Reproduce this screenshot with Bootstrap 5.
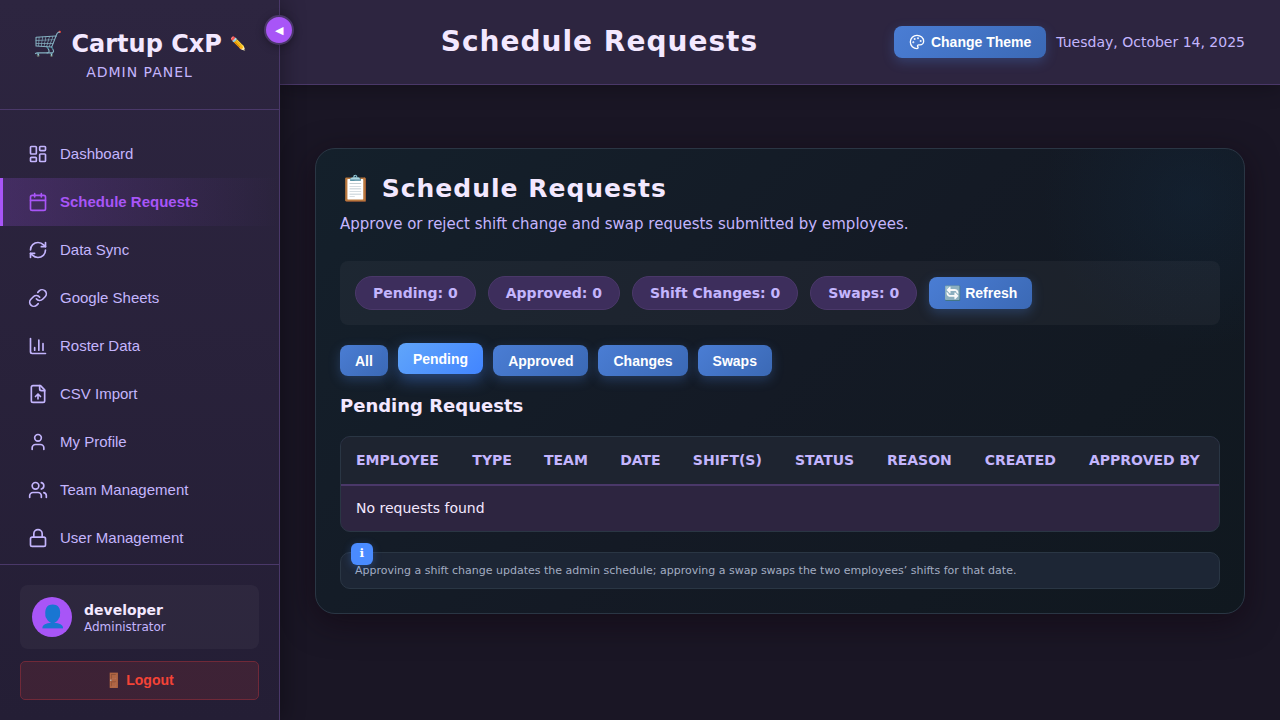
<!DOCTYPE html>
<html lang="en" data-bs-theme="dark">
<head>
<meta charset="utf-8">
<meta name="viewport" content="width=device-width, initial-scale=1">
<title>Schedule Requests - Cartup CxP</title>
<link href="https://cdn.jsdelivr.net/npm/bootstrap@5.3.0/dist/css/bootstrap.min.css" rel="stylesheet">
<style>
:root { --line: #4a3869; --ink: #f3e8ff; --soft: #c4b5fd; --accent: #a855f7; --edge: #2a3644; }
body { background: #1a1625; color: var(--ink); font-family: "DejaVu Sans", sans-serif; font-size: 14px; }
h1, h2, h3 { color: var(--ink); }
button, .side-link { font-family: "Liberation Sans", sans-serif; }

.sidebar { width: 280px; background: linear-gradient(180deg, #2d2540, #241e35); border-right: 1px solid var(--line); box-shadow: 4px 0 20px rgba(0,0,0,.3); z-index: 2; }
.side-head { padding: 25px 20px 28px; border-bottom: 1px solid var(--line); }
.brand { font-size: 24px; line-height: 38px; }
.brand-edit { font-size: 13px; line-height: 16px; }
.brand-sub { color: var(--soft); line-height: 18px; letter-spacing: 1px; }
.side-nav { min-height: 0; overflow: hidden; padding-top: 20px; }
.side-link { height: 48px; padding: 0 28px 0 25px; border-left: 3px solid transparent; color: var(--soft); font-size: 15px; text-decoration: none; }
.side-link:hover { color: var(--ink); }
.side-link.active { color: var(--accent); font-weight: 700; border-left-color: var(--accent); background: linear-gradient(90deg, rgba(168,85,247,.2), transparent); }
.line-icon { fill: none; stroke: currentColor; stroke-width: 2; stroke-linecap: round; stroke-linejoin: round; flex: none; }
.side-foot { padding: 20px; border-top: 1px solid var(--line); }
.user-box { background: rgba(255,255,255,.04); border-radius: 8px; }
.avatar { width: 40px; height: 40px; background: var(--accent); font-size: 22px; line-height: 40px; }
.user-name { line-height: 20px; }
.user-role { color: var(--soft); font-size: 12px; line-height: 14px; }
.logout { height: 39px; border: 1px solid #702938; border-radius: 5px; background: rgba(244,67,54,.12); color: #f44336; font-size: 14px; }
.collapse-btn { top: 15px; right: -15px; width: 30px; height: 30px; border: 2px solid var(--line); background: var(--accent); color: #fff; font-size: 11px; box-shadow: 0 2px 8px rgba(0,0,0,.3); }

.topbar { height: 85px; padding: 0 35px; gap: 10px; background: #2d2540; border-bottom: 1px solid var(--line); box-shadow: 0 2px 20px rgba(0,0,0,.3); }
.page-title { font-size: 28px; line-height: 36px; letter-spacing: 1px; }
.today { color: var(--soft); }

.act { min-height: 31px; padding: 0 15px; border: 0; border-radius: 8px; color: #fff; font-size: 14px; font-weight: 700; line-height: 20px; background: linear-gradient(135deg, #4a7dd4, #3b69b5); box-shadow: 0 4px 12px rgba(74,125,212,.3); }
.act-tall { min-height: 32px; gap: 6px; }
.act.current { background: linear-gradient(135deg, #60a5fa, #4285ff); box-shadow: 0 6px 16px rgba(74,139,255,.4); transform: translateY(-2px); }

.content { padding: 63px 35px; }
.panel { padding: 25px 24px 24px; border: 1px solid var(--edge); border-radius: 20px; box-shadow: 0 8px 32px rgba(16,4,12,.5);
  background: radial-gradient(circle 150px at calc(100% - 52px) 50px, rgba(20,50,80,.25), transparent), linear-gradient(135deg, #14202b 0%, #141a25 50%, #10181f 100%); }
.panel-title { font-size: 25px; line-height: 30px; letter-spacing: 1px; }
.panel-lead { color: var(--soft); font-size: 15px; line-height: 24px; margin-bottom: 25px; }
.stats { padding: 15px; gap: 12px; border-radius: 8px; background: rgba(255,255,255,.04); }
.stat { padding: 0 17px; height: 34px; line-height: 32px; border: 1px solid #4a3869; border-radius: 17px; background: #3d2e5c; color: var(--soft); font-weight: 700; }
.filters { gap: 10px; }
.section-title { font-size: 18px; line-height: 20px; margin: 20px 0; }
.grid-box { border: 1px solid var(--edge); border-radius: 10px; overflow: hidden; background: #2d2540; }
.req-table { width: 100%; border-collapse: collapse; }
.req-table th { height: 48px; padding: 0 15px; background: #1e2430; color: var(--soft); white-space: nowrap; border-bottom: 2px solid var(--line); }
.req-table td { height: 46px; padding: 0 15px; }
.note { margin-top: 20px; padding: 8px 14px 7px; border: 1px solid var(--edge); border-radius: 10px; background: #1d2635; color: #a3adc2; font-size: 11px; line-height: 20px; }
.note-mark { top: -10px; left: 10px; width: 22px; height: 22px; border-radius: 6px; background: #4a8bff; color: #fff; font-size: 12px; line-height: 20px; font-weight: 700; box-shadow: 0 2px 8px rgba(74,139,255,.3); }
</style>
</head>
<body>
<div class="d-flex vh-100 overflow-hidden">
  <aside class="sidebar position-relative d-flex flex-column flex-shrink-0">
    <button class="collapse-btn position-absolute rounded-circle p-0 d-flex align-items-center justify-content-center" type="button" aria-label="Collapse sidebar">◀</button>
    <div class="side-head text-center">
      <div class="d-flex align-items-center justify-content-center gap-2">
        <span class="brand fw-bold text-nowrap">🛒 Cartup CxP</span>
        <button class="brand-edit border-0 bg-transparent p-0" type="button" aria-label="Edit name">✏️</button>
      </div>
      <div class="brand-sub">ADMIN PANEL</div>
    </div>
    <nav class="side-nav flex-fill">
      <a class="side-link d-flex align-items-center" href="#"><svg class="line-icon me-2" width="20" height="20" viewBox="0 0 24 24"><rect x="3" y="3" width="7" height="9" rx="1"/><rect x="14" y="3" width="7" height="5" rx="1"/><rect x="14" y="12" width="7" height="9" rx="1"/><rect x="3" y="16" width="7" height="5" rx="1"/></svg><span class="ms-1">Dashboard</span></a>
      <a class="side-link active d-flex align-items-center" href="#" aria-current="page"><svg class="line-icon me-2" width="20" height="20" viewBox="0 0 24 24"><path d="M8 2v4M16 2v4M3 10h18"/><rect x="3" y="4" width="18" height="18" rx="2"/></svg><span class="ms-1">Schedule Requests</span></a>
      <a class="side-link d-flex align-items-center" href="#"><svg class="line-icon me-2" width="20" height="20" viewBox="0 0 24 24"><path d="M3 12a9 9 0 0 1 9-9 9.75 9.75 0 0 1 6.74 2.74L21 8"/><path d="M21 3v5h-5"/><path d="M21 12a9 9 0 0 1-9 9 9.75 9.75 0 0 1-6.74-2.74L3 16"/><path d="M8 16H3v5"/></svg><span class="ms-1">Data Sync</span></a>
      <a class="side-link d-flex align-items-center" href="#"><svg class="line-icon me-2" width="20" height="20" viewBox="0 0 24 24"><path d="M10 13a5 5 0 0 0 7.54.54l3-3a5 5 0 0 0-7.07-7.07l-1.72 1.71"/><path d="M14 11a5 5 0 0 0-7.54-.54l-3 3a5 5 0 0 0 7.07 7.07l1.71-1.71"/></svg><span class="ms-1">Google Sheets</span></a>
      <a class="side-link d-flex align-items-center" href="#"><svg class="line-icon me-2" width="20" height="20" viewBox="0 0 24 24"><path d="M3 3v16a2 2 0 0 0 2 2h16M18 17V9M13 17V5M8 17v-3"/></svg><span class="ms-1">Roster Data</span></a>
      <a class="side-link d-flex align-items-center" href="#"><svg class="line-icon me-2" width="20" height="20" viewBox="0 0 24 24"><path d="M15 2H6a2 2 0 0 0-2 2v16a2 2 0 0 0 2 2h12a2 2 0 0 0 2-2V7Z"/><path d="M14 2v4a2 2 0 0 0 2 2h4"/><path d="M12 12v6M15 15l-3-3-3 3"/></svg><span class="ms-1">CSV Import</span></a>
      <a class="side-link d-flex align-items-center" href="#"><svg class="line-icon me-2" width="20" height="20" viewBox="0 0 24 24"><path d="M19 21v-2a4 4 0 0 0-4-4H9a4 4 0 0 0-4 4v2"/><circle cx="12" cy="7" r="4"/></svg><span class="ms-1">My Profile</span></a>
      <a class="side-link d-flex align-items-center" href="#"><svg class="line-icon me-2" width="20" height="20" viewBox="0 0 24 24"><path d="M16 21v-2a4 4 0 0 0-4-4H6a4 4 0 0 0-4 4v2"/><circle cx="9" cy="7" r="4"/><path d="M22 21v-2a4 4 0 0 0-3-3.87M16 3.13a4 4 0 0 1 0 7.75"/></svg><span class="ms-1">Team Management</span></a>
      <a class="side-link d-flex align-items-center" href="#"><svg class="line-icon me-2" width="20" height="20" viewBox="0 0 24 24"><rect x="3" y="11" width="18" height="11" rx="2"/><path d="M7 11V7a5 5 0 0 1 10 0v4"/></svg><span class="ms-1">User Management</span></a>
    </nav>
    <div class="side-foot">
      <div class="user-box d-flex align-items-center p-2 mb-2">
        <div class="avatar rounded-circle text-center m-1">👤</div>
        <div class="ms-2">
          <div class="user-name fw-bold">developer</div>
          <div class="user-role">Administrator</div>
        </div>
      </div>
      <button class="logout w-100 fw-bold mt-1" type="button">🚪 Logout</button>
    </div>
  </aside>

  <div class="flex-fill d-flex flex-column overflow-hidden">
    <header class="topbar d-flex align-items-center">
      <h1 class="page-title flex-fill text-center fw-bold m-0">Schedule Requests</h1>
      <button class="act act-tall d-flex align-items-center" type="button"><svg class="line-icon" width="16" height="16" viewBox="0 0 24 24"><circle cx="13.5" cy="6.5" r=".5" fill="currentColor"/><circle cx="17.5" cy="10.5" r=".5" fill="currentColor"/><circle cx="8.5" cy="7.5" r=".5" fill="currentColor"/><circle cx="6.5" cy="12.5" r=".5" fill="currentColor"/><path d="M12 2C6.5 2 2 6.5 2 12s4.500 10 10 10c.926 0 1.648-.746 1.648-1.688 0-.437-.18-.835-.437-1.125-.29-.289-.438-.652-.438-1.125a1.640 1.640 0 0 1 1.668-1.668h1.996c3.051 0 5.555-2.503 5.555-5.554C21.965 6.012 17.461 2 12 2z"/></svg>Change Theme</button>
      <span class="today text-nowrap">Tuesday, October 14, 2025</span>
    </header>

    <main class="content flex-fill overflow-auto">
      <section class="panel">
        <h2 class="panel-title fw-bold mb-2">📋 Schedule Requests</h2>
        <p class="panel-lead">Approve or reject shift change and swap requests submitted by employees.</p>
        <div class="stats d-flex flex-wrap align-items-center">
          <span class="stat">Pending: 0</span>
          <span class="stat">Approved: 0</span>
          <span class="stat">Shift Changes: 0</span>
          <span class="stat">Swaps: 0</span>
          <button class="act act-tall" type="button">🔄 Refresh</button>
        </div>
        <div class="filters d-flex flex-wrap mt-3 pt-1" role="group" aria-label="Filter requests">
          <button class="act" type="button">All</button>
          <button class="act current" type="button" aria-pressed="true">Pending</button>
          <button class="act" type="button">Approved</button>
          <button class="act" type="button">Changes</button>
          <button class="act" type="button">Swaps</button>
        </div>
        <h3 class="section-title fw-bold">Pending Requests</h3>
        <div class="grid-box">
          <table class="req-table">
            <thead>
              <tr><th scope="col">EMPLOYEE</th><th scope="col">TYPE</th><th scope="col">TEAM</th><th scope="col">DATE</th><th scope="col">SHIFT(S)</th><th scope="col">STATUS</th><th scope="col">REASON</th><th scope="col">CREATED</th><th scope="col">APPROVED BY</th></tr>
            </thead>
            <tbody>
              <tr><td colspan="9">No requests found</td></tr>
            </tbody>
          </table>
        </div>
        <div class="note position-relative">
          <span class="note-mark position-absolute text-center" aria-hidden="true">ℹ</span>
          Approving a shift change updates the admin schedule; approving a swap swaps the two employees’ shifts for that date.
        </div>
      </section>
    </main>
  </div>
</div>
<script src="https://cdn.jsdelivr.net/npm/bootstrap@5.3.0/dist/js/bootstrap.bundle.min.js"></script>
</body>
</html>
